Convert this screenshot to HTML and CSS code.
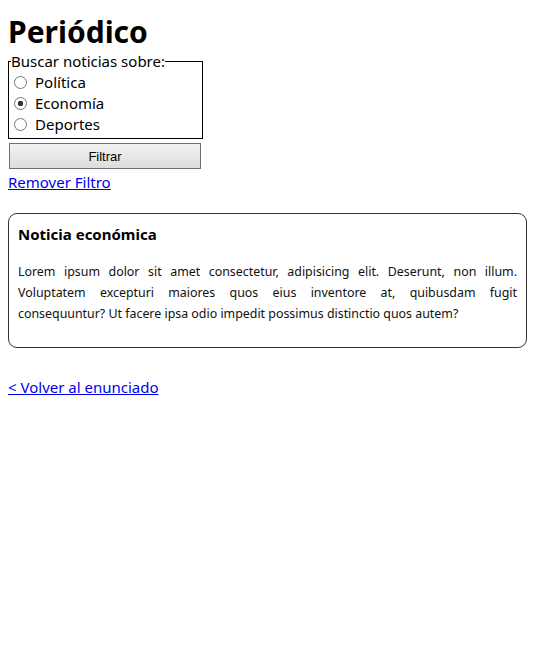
FILE: index.html
```html
<!DOCTYPE html>
<html lang="es">
<head>
<meta charset="utf-8">
<title>Periódico</title>
<link rel="stylesheet" href="styles.css">
</head>
<body>
<h1 class="title">Periódico</h1>
<form class="filter">
  <fieldset class="topics">
    <legend class="topics-legend">Buscar noticias sobre:</legend>
    <label class="option"><input type="radio" name="t" class="radio"> Política</label>
    <label class="option"><input type="radio" name="t" class="radio" checked> Economía</label>
    <label class="option"><input type="radio" name="t" class="radio"> Deportes</label>
  </fieldset>
  <button type="button" class="btn">Filtrar</button>
</form>
<p class="remove"><a href="#" class="link">Remover Filtro</a></p>
<article class="card">
  <h2 class="card-title">Noticia económica</h2>
  <p class="card-text">Lorem ipsum dolor sit amet consectetur, adipisicing elit. Deserunt, non illum. Voluptatem excepturi maiores quos eius inventore at, quibusdam fugit consequuntur? Ut facere ipsa odio impedit possimus distinctio quos autem?</p>
</article>
<p class="back"><a href="#" class="link">&lt; Volver al enunciado</a></p>
</body>
</html>
```
FILE: styles.css
```css
html, body {
  background: #fff;
}
body {
  margin: 8px;
  font-family: "Noto Sans", "Open Sans", sans-serif;
  font-size: 15px;
  color: #000;
}
.title {
  font-size: 30px;
  font-weight: bold;
  margin: 5px 0 -1px;
  line-height: 38px;
}
.filter {
  margin: 0;
}
.topics {
  width: 195px;
  box-sizing: border-box;
  margin: 0;
  padding: 0 2px 3px 5px;
  border: 1px solid #000;
  display: flex;
  flex-direction: column;
}
.topics-legend {
  padding: 0;
  margin-left: -3px;
  line-height: 22px;
}
.option {
  display: flex;
  align-items: center;
  gap: 8px;
  line-height: 21px;
  height: 21px;
}
.radio {
  appearance: none;
  -webkit-appearance: none;
  margin: 0;
  width: 13px;
  height: 13px;
  box-sizing: border-box;
  border: 1px solid #767676;
  border-radius: 50%;
  background: #fff;
}
.radio:checked {
  background: radial-gradient(circle, #333 0, #333 2.5px, #fff 3px);
}
.btn {
  display: block;
  width: 192px;
  height: 26px;
  margin: 4px 0 0 1px;
  font-family: "Liberation Sans", Arial, sans-serif;
  font-size: 13px;
  color: #000;
  border: 1px solid #707070;
  background: linear-gradient(#f2f2f2, #dddddd);
  border-radius: 0;
}
.remove {
  margin: 2px 0 0;
  line-height: 22px;
}
.link {
  color: #0000ee;
  text-decoration: underline;
}
.card {
  margin: 20px 0 0;
  border: 1px solid #333;
  border-radius: 9px;
  padding: 0 9px;
}
.card-title {
  font-size: 15px;
  font-weight: bold;
  margin: 9px 0 0;
  line-height: 22px;
}
.card-text {
  font-size: 12.4px;
  line-height: 21px;
  text-align: justify;
  color: #111;
  margin: 16px 0 23px;
}
.back {
  margin: 28px 0 0;
  line-height: 22px;
}
```
